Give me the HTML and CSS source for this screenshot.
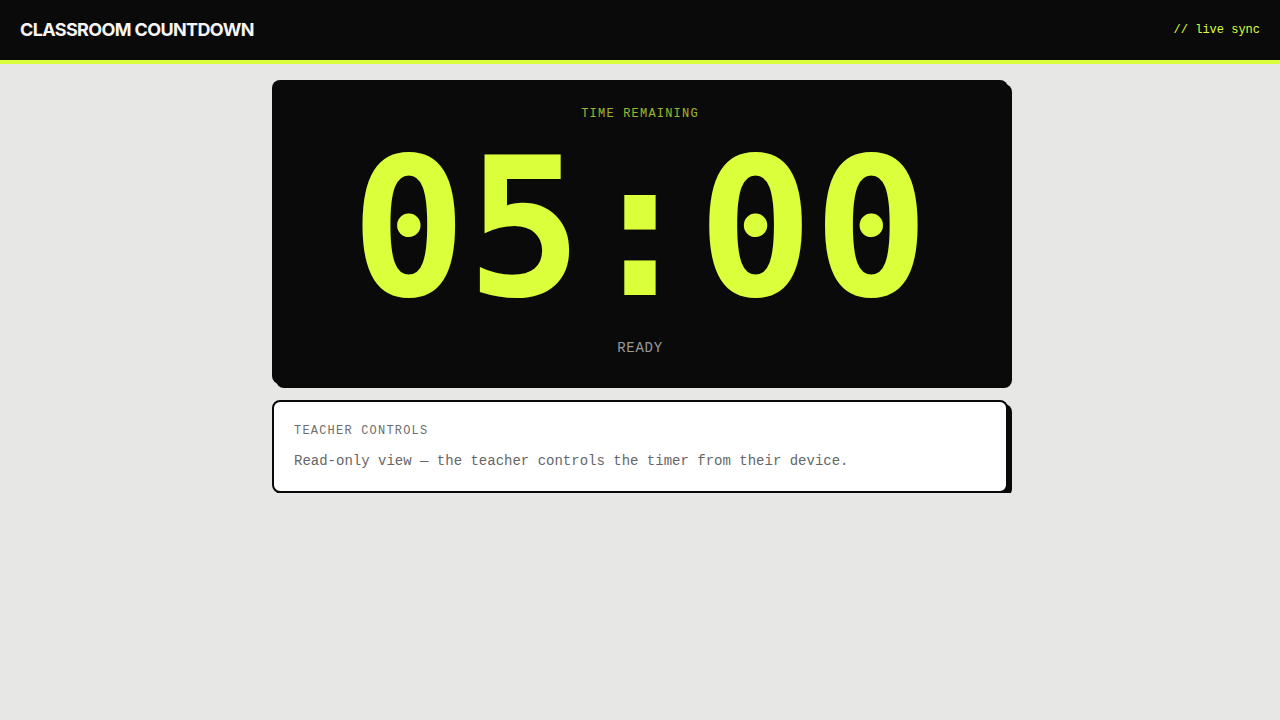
FILE: index.html
```html
<!DOCTYPE html>
<html lang="en">
<head>
<meta charset="utf-8">
<title>Classroom Countdown</title>
<link rel="stylesheet" href="styles.css">
</head>
<body>
<header class="topbar">
  <h1 class="brand">CLASSROOM COUNTDOWN</h1>
  <span class="sync">// live sync</span>
</header>
<main class="main">
  <section class="timer-card">
    <div class="timer-label">TIME REMAINING</div>
    <div class="timer-digits">05:00</div>
    <div class="timer-status">READY</div>
  </section>
  <section class="controls-card">
    <div class="controls-title">TEACHER CONTROLS</div>
    <p class="controls-text">Read-only view — the teacher controls the timer from their device.</p>
  </section>
</main>
</body>
</html>
```
FILE: styles.css
```css
* { box-sizing: border-box; }
html, body { margin: 0; padding: 0; }
body {
  background: #e7e7e5;
  font-family: "Liberation Mono", monospace;
  color: #0a0a0a;
}
.topbar {
  height: 64px;
  background: #0a0a0a;
  border-bottom: 4px solid #dbff3b;
  display: flex;
  align-items: center;
  justify-content: space-between;
  padding: 0 20px;
}
.brand {
  margin: 0 0 1px;
  font-family: Inter, "Liberation Sans", sans-serif;
  font-size: 18px;
  font-weight: 700;
  letter-spacing: -0.035em;
  color: #f5f5f5;
}
.sync {
  font-family: "Liberation Mono", monospace;
  font-size: 12px;
  color: #dbff3b;
}
.main {
  width: 736px;
  margin: 16px auto 0;
  display: flex;
  flex-direction: column;
  gap: 16px;
}
.timer-card {
  background: #0a0a0a;
  border-radius: 8px;
  box-shadow: 4px 4px 0 #0a0a0a;
  padding: 25px 24px 26px;
  display: flex;
  flex-direction: column;
  align-items: center;
  height: 304px;
}
.timer-label {
  font-size: 12px;
  line-height: 18px;
  letter-spacing: 0.1em;
  color: #dbff3b;
  opacity: 0.7;
}
.timer-digits {
  font-family: "DejaVu Sans Mono", monospace;
  font-weight: 700;
  font-size: 192px;
  line-height: 1;
  margin-top: 10px;
  color: #dbff3b;
}
.timer-status {
  margin-top: 13px;
  font-size: 14px;
  line-height: 20px;
  letter-spacing: 0.05em;
  color: #9a9a9a;
}
.controls-card {
  background: #ffffff;
  border: 2px solid #0a0a0a;
  border-radius: 8px;
  box-shadow: 4px 4px 0 #0a0a0a;
  padding: 21px 20px 19px;
}
.controls-title {
  font-size: 12px;
  line-height: 16px;
  letter-spacing: 0.1em;
  color: #6e6e6e;
}
.controls-text {
  margin: 11px 0 0;
  font-size: 14px;
  line-height: 22px;
  color: #666;
}
```
